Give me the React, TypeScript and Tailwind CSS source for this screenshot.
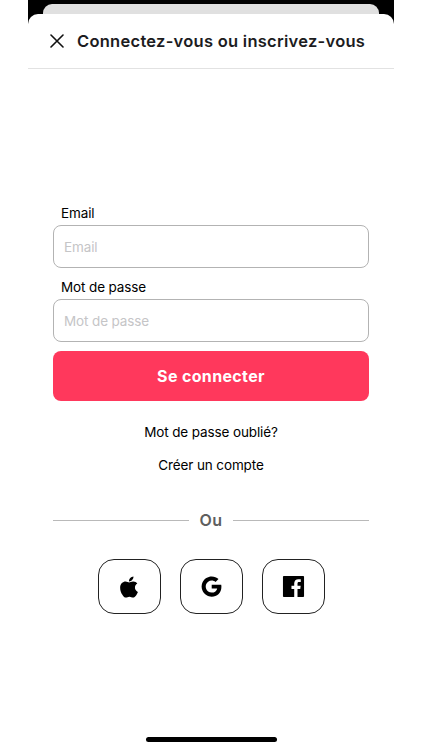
import type { ReactNode } from 'react'
import { AiFillApple, AiFillFacebook, AiOutlineGoogle } from 'react-icons/ai'

type FieldProps = { id: string; label: string; type: string; className?: string }

function Field({ id, label, type, className = '' }: FieldProps) {
  return (
    <div className={className}>
      <label htmlFor={id} className="block h-5 pl-2 text-[13.5px] leading-5 tracking-[-0.12px] text-black">
        {label}
      </label>
      <input
        id={id}
        type={type}
        placeholder={label}
        className="mt-[2px] block h-[43px] w-full rounded-[8px] border border-[#b3b3b3] bg-white px-[10px] text-[13.5px] tracking-[-0.12px] text-black outline-none placeholder:text-[#c5c5c7]"
      />
    </div>
  )
}

function SocialButton({ label, children }: { label: string; children: ReactNode }) {
  return (
    <button
      type="button"
      aria-label={label}
      className="flex h-[55px] w-[63px] items-center justify-center rounded-[16px] border border-[#222] text-black"
    >
      {children}
    </button>
  )
}

export default function App() {
  return (
    <div className="h-[750px] w-[422px] overflow-hidden bg-white font-['Inter','Liberation_Sans',sans-serif]">
      <div className="mx-auto flex h-full w-[366px] flex-col">
        {/* the previous card stays visible behind the sheet */}
        <div className="h-7 shrink-0 bg-black px-[15px] pt-1">
          <div className="h-6 rounded-t-[9px] bg-[#e0e0e0]" />
        </div>

        <header className="-mt-[14px] flex h-[55px] shrink-0 items-center rounded-t-[10px] border-b border-[#e2e2e2] bg-white pl-[22px]">
          <button type="button" aria-label="Fermer" className="size-[14px]">
            <svg viewBox="0 0 14 14" className="size-[14px]" fill="none" stroke="#111" strokeWidth="1.6" strokeLinecap="round">
              <path d="M1 1l12 12M13 1L1 13" />
            </svg>
          </button>
          <h1 className="ml-[13px] whitespace-nowrap text-[16.5px] font-semibold tracking-[0.27px] text-[#1c1c1e]">
            Connectez-vous ou inscrivez-vous
          </h1>
        </header>

        <main className="flex flex-col px-[25px] pt-[134px]">
          <Field id="email" label="Email" type="email" />
          <Field id="password" label="Mot de passe" type="password" className="mt-[9px]" />

          <button
            type="button"
            className="mt-[9px] h-[50px] rounded-[8px] bg-[#ff385c] text-[16px] font-bold tracking-[0.35px] text-white"
          >
            Se connecter
          </button>

          <div className="mt-[21px] flex flex-col items-center gap-[13px] text-[13.5px] leading-5 tracking-[-0.12px] text-black">
            <a href="#">Mot de passe oublié?</a>
            <a href="#">Créer un compte</a>
          </div>

          <div className="mt-[33px] flex h-6 items-center gap-[10px]">
            <span className="h-px flex-1 bg-[#b9b9b9]" />
            <span className="w-6 text-center text-[16px] font-semibold tracking-[0.4px] text-[#5e5e5e]">Ou</span>
            <span className="h-px flex-1 bg-[#b9b9b9]" />
          </div>

          <div className="mt-[27px] flex justify-center gap-[19px]">
            <SocialButton label="Apple">
              <AiFillApple size={26} />
            </SocialButton>
            <SocialButton label="Google">
              <AiOutlineGoogle size={27} />
            </SocialButton>
            <SocialButton label="Facebook">
              <AiFillFacebook size={27} />
            </SocialButton>
          </div>
        </main>

        <div className="mx-auto mt-auto mb-2 h-[5px] w-[131px] shrink-0 rounded-full bg-black" />
      </div>
    </div>
  )
}
